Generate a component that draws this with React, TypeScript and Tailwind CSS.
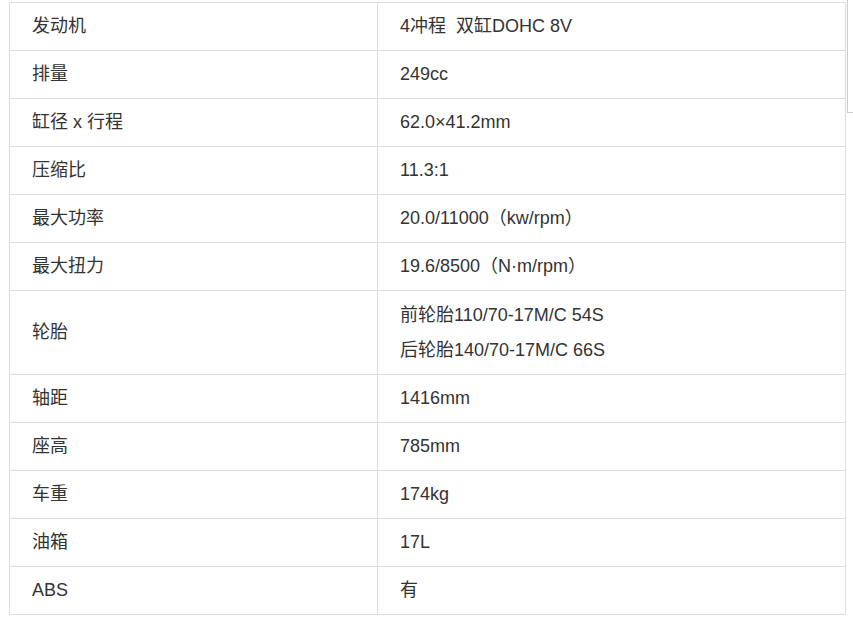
const rows: { label: string; value: string[] }[] = [
  { label: "发动机", value: ["4冲程  双缸DOHC 8V"] },
  { label: "排量", value: ["249cc"] },
  { label: "缸径 x 行程", value: ["62.0×41.2mm"] },
  { label: "压缩比", value: ["11.3:1"] },
  { label: "最大功率", value: ["20.0/11000（kw/rpm）"] },
  { label: "最大扭力", value: ["19.6/8500（N·m/rpm）"] },
  { label: "轮胎", value: ["前轮胎110/70-17M/C 54S", "后轮胎140/70-17M/C 66S"] },
  { label: "轴距", value: ["1416mm"] },
  { label: "座高", value: ["785mm"] },
  { label: "车重", value: ["174kg"] },
  { label: "油箱", value: ["17L"] },
  { label: "ABS", value: ["有"] },
];

export default function App() {
  return (
    <div
      className="relative h-[620px] w-[853px] overflow-hidden bg-white pl-[9px] pt-[2px] text-[18px] text-[#333]"
      style={{ fontFamily: '"Liberation Sans", "Noto Sans CJK SC", sans-serif' }}
    >
      <table className="w-[837px] table-fixed border-collapse border border-[#ddd]">
        <tbody>
          {rows.map((r) => (
            <tr key={r.label} className="border-b border-[#ddd]">
              <td className="w-[368px] border-r border-[#ddd] pl-[22px] align-middle leading-[35px]">
                {r.label}
              </td>
              <td
                className={
                  r.value.length > 1
                    ? "pt-[7px] pb-[6px] pl-[22px] align-middle leading-[35px] whitespace-pre"
                    : "py-[6px] pl-[22px] align-middle leading-[35px] whitespace-pre"
                }
              >
                {r.value.map((v) => (
                  <div key={v}>{v}</div>
                ))}
              </td>
            </tr>
          ))}
        </tbody>
      </table>

      {/* scrollbar ghost on the right edge */}
      <div className="absolute left-[847px] top-0 h-[113px] w-[6px] border-b border-l border-[#ccc]" />
    </div>
  );
}
